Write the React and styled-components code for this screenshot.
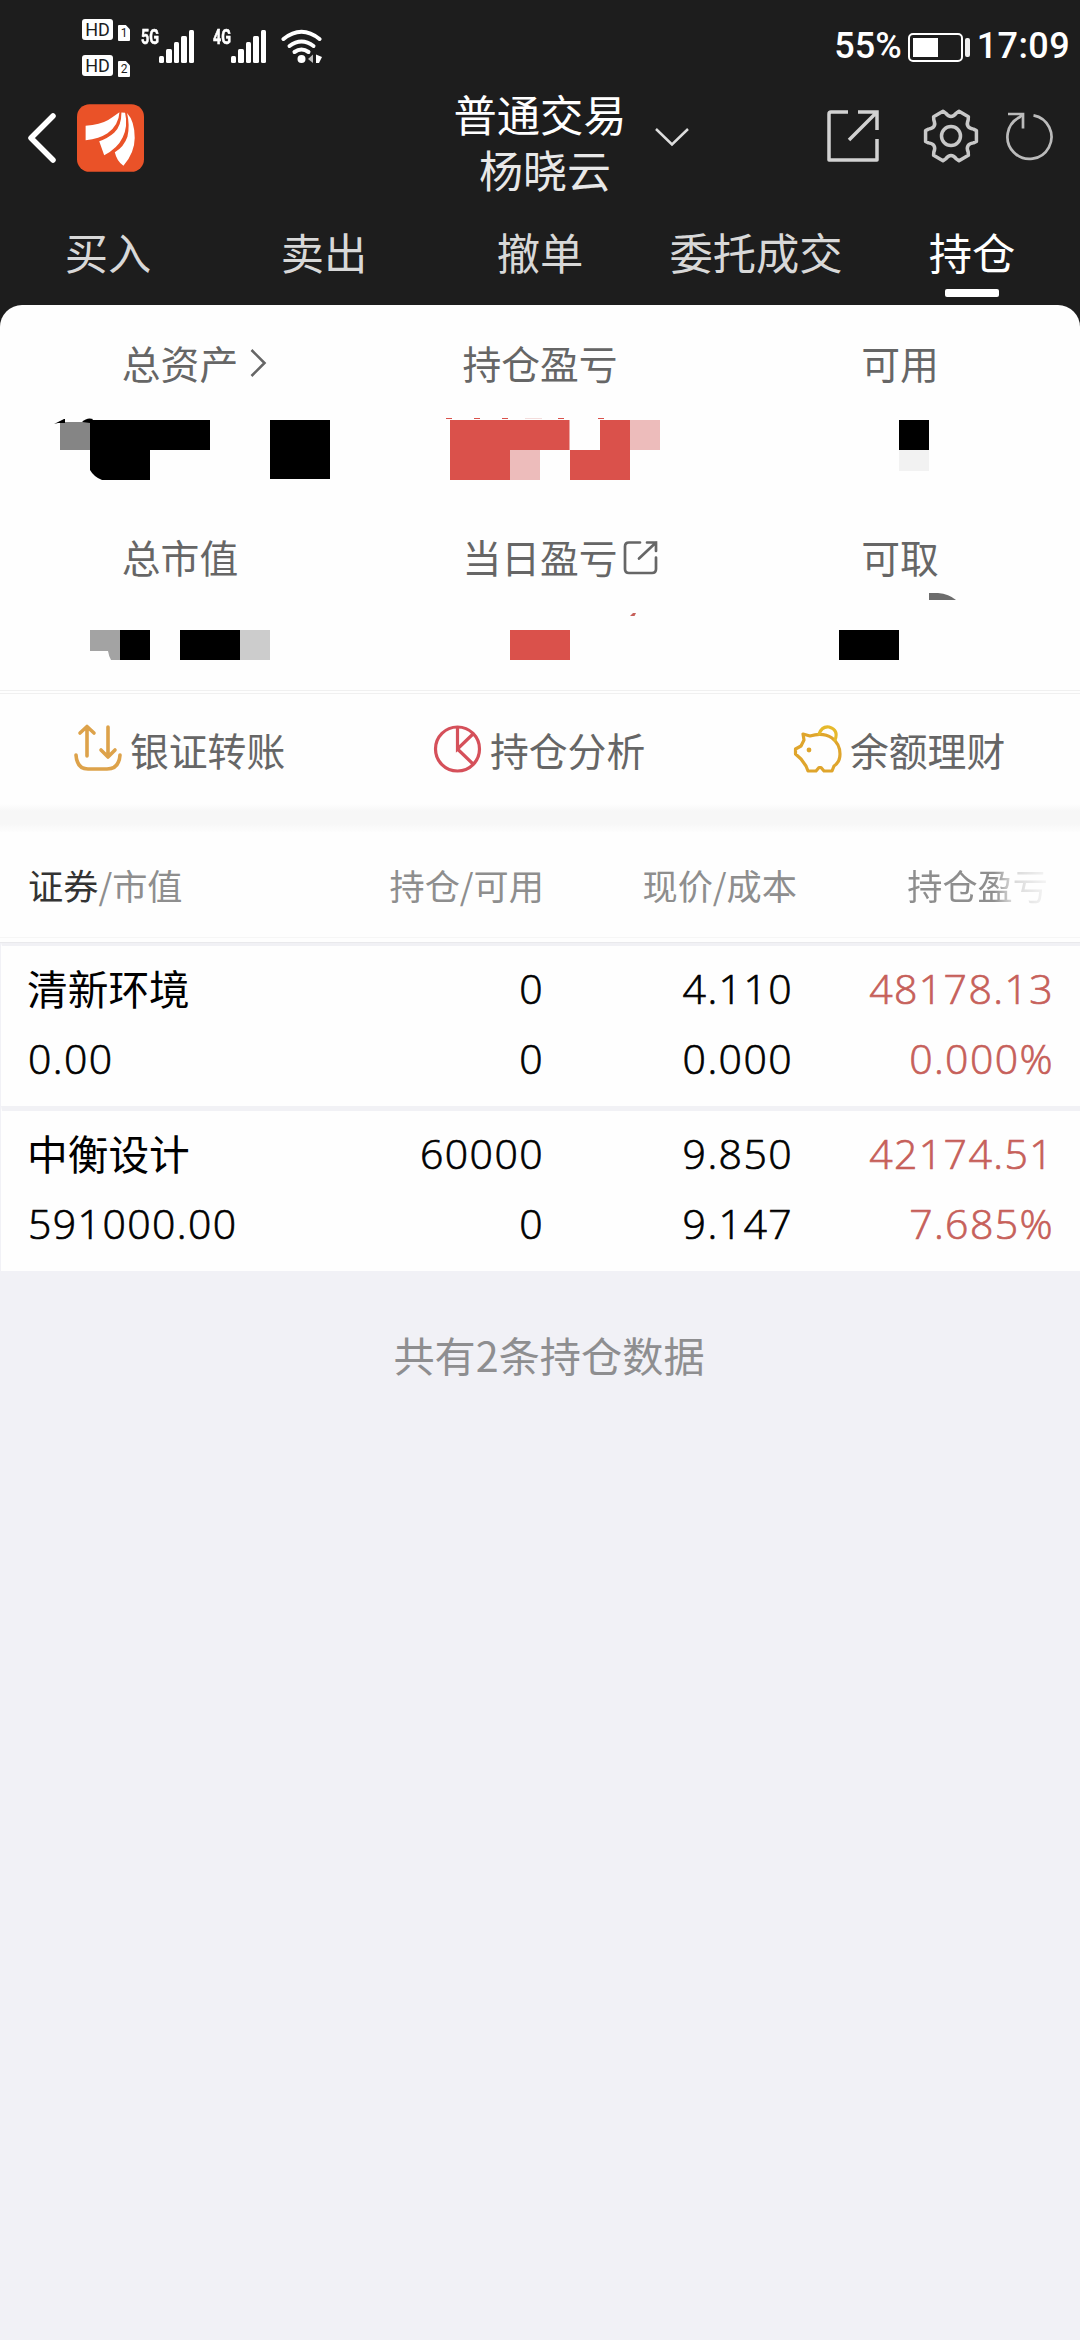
import React from "react";
import styled, { createGlobalStyle } from "styled-components";

const GlobalStyle = createGlobalStyle`
  body {
    margin: 0;
    background: #f1f1f6;
    font-family: "Noto Sans CJK SC", sans-serif;
  }
`;

const Page = styled.div`
  display: flex;
  flex-direction: column;
  width: 1080px;
  min-height: 2340px;
  background: #f1f1f6;
`;

const Dark = styled.div`
  height: 330px;
  margin-bottom: -25px;
  background: #1d1d1d;
`;

const StatusBar = styled.div`
  display: flex;
  align-items: flex-start;
  height: 65px;
  padding: 19px 10px 0 82px;
  color: #fff;
  font-family: Roboto, sans-serif;
`;

const SimList = styled.div`
  display: grid;
  row-gap: 15px;
  margin-right: 11px;
`;

const Sim = styled.div`
  display: flex;
  height: 21px;
  color: #1d1d1d;
`;

const HdBadge = styled.span`
  width: 31px;
  height: 21px;
  margin-right: 5px;
  border-radius: 3px;
  background: #fff;
  font-size: 18px;
  line-height: 22px;
  text-align: center;
`;

const SimNumber = styled.span`
  width: 12px;
  height: 16px;
  margin-top: 6px;
  border-radius: 1px;
  background: #fff;
  clip-path: polygon(0 0, 65% 0, 100% 28%, 100% 100%, 0 100%);
  font-size: 12px;
  line-height: 17px;
  text-align: center;
`;

const Network = styled.span`
  width: 18px;
  margin-top: 11px;
  font-size: 21px;
  font-weight: 700;
  line-height: 15px;
  transform: scaleX(0.68);
  transform-origin: left;
  -webkit-text-stroke: 0.6px #fff;
`;

const SignalIcon = styled.svg`
  width: 35px;
  height: 34px;
  margin: 11px 19px 0 0;
`;

const WifiIcon = styled.svg`
  width: 42px;
  height: 36px;
  margin: 10px auto 0 -4px;
`;

const StatusText = styled.span`
  margin-top: 6px;
  font-size: 36px;
  font-weight: 500;
  line-height: 42px;
  letter-spacing: ${(props) => props.$spacing || 0}px;
`;

const BatteryIcon = styled.svg`
  width: 62px;
  height: 29px;
  margin: 14px 7px 0 6px;
`;

const Header = styled.div`
  display: flex;
  align-items: center;
  height: 116px;
  color: #fff;

  > svg {
    flex: none;
    margin-bottom: 8px;
  }
`;

const BackIcon = styled.svg`
  width: 30px;
  height: 52px;
  margin-left: 27px;
`;

const Logo = styled.svg`
  width: 67px;
  height: 68px;
  margin-left: 20px;
`;

const Title = styled.div`
  width: 176px;
  margin: 0 0 2px 308px;
  font-size: 43.3px;
  line-height: 56px;
  text-align: center;
  white-space: nowrap;
`;

const Account = styled.div`
  padding-left: 10px;
  color: #e8e8e8;
  font-size: 44px;
`;

const DownIcon = styled.svg`
  width: 36px;
  height: 20px;
  margin-left: 26px;
`;

const Tools = styled.div`
  display: flex;
  align-items: center;
  margin: 0 0 13px 137px;
`;

const OpenIcon = styled.svg`
  width: 52px;
  height: 52px;
`;

const GearIcon = styled.svg`
  width: 56px;
  height: 56px;
  margin-left: 44px;
`;

const RefreshIcon = styled.svg`
  width: 50px;
  height: 50px;
  margin-left: 25px;
`;

const Tabs = styled.div`
  display: grid;
  grid-template-columns: repeat(5, 1fr);
  height: 105px;
`;

const Tab = styled.div`
  display: flex;
  flex-direction: column;
  align-items: center;
  padding-top: 21px;
  color: ${(props) => (props.$active ? "#fff" : "#d8d8d8")};
  font-size: 43.3px;
  line-height: 60px;

  &::after {
    content: "";
    width: 54px;
    height: 8px;
    margin-top: 8px;
    border-radius: 2px;
    background: ${(props) => (props.$active ? "#fff" : "transparent")};
  }
`;

const Summary = styled.div`
  display: grid;
  grid-template-columns: repeat(3, 360px);
  grid-template-rows: 150px 150px;
  row-gap: 44px;
  padding: 32px 0 9px;
  border-radius: 22px 22px 0 0;
  background: #fefefe;
`;

const StatBox = styled.div`
  display: flex;
  flex-direction: column;
`;

const StatLabel = styled.div`
  display: flex;
  align-items: center;
  justify-content: center;
  height: 50px;
  color: #666;
  font-size: 38.8px;
  line-height: 50px;

  > svg {
    flex: none;
    width: 36px;
    height: 36px;
    margin: 4px -40px 0 4px;
  }
`;

const Mosaic = styled.svg`
  width: 360px;
  height: 100px;
`;

const Rule = styled.div`
  height: 2px;
  border: solid #f0f0f0;
  border-width: 1px 0;
  background: #fefefe;
`;

const Actions = styled.div`
  display: grid;
  grid-template-columns: repeat(3, 360px);
  height: 110px;
  background: #fefefe;
`;

const Action = styled.div`
  display: flex;
  align-items: center;
  padding-left: 73px;
  color: #666;
  font-size: 38.8px;
  line-height: 54px;

  > svg {
    width: 50px;
    height: 50px;
    margin-right: 7px;
  }
`;

const Band = styled.div`
  height: 28px;
  background: linear-gradient(#fefefe, #f7f7f7 25%, #f7f7f7 70%, #fdfdfd);
`;

const TableHead = styled.div`
  display: grid;
  grid-template-columns: 272px 244px 253px 257px;
  align-items: center;
  height: 105px;
  padding-left: 28px;
  border-bottom: 1px solid #f6f6f6;
  background: #fefefe;
  color: #8e8e8e;
  font-size: 35.2px;
  line-height: 50px;

  > :not(:first-child) {
    text-align: right;
  }

  b {
    color: #333;
    font-weight: 400;
  }
`;

const FadedHead = styled.div`
  padding-right: 6px;
  mask-image: linear-gradient(to right, #000 197px, rgba(0, 0, 0, 0.35) 214px, rgba(0, 0, 0, 0.08) 251px);
`;

const HeadRule = styled.div`
  height: 4px;
  border-bottom: 1px solid #e9e9ec;
  background: #fefefe;
`;

const Position = styled.div`
  display: grid;
  grid-template-columns: 272px 244px 249px 261px;
  margin-left: 1px;
  padding: 7px 0 13px 26px;
  border-left: 1px solid #fefefe;
  border-top: ${(props) => props.$gap}px solid #f1f1f5;
  background: #fefefe;

  > :not(:first-child) {
    text-align: right;
  }
`;

const Value = styled.div`
  color: ${(props) => (props.$gain ? "#c6605a" : "#000")};
  font-family: "Open Sans", "Noto Sans CJK SC", sans-serif;
  font-size: 41px;
  font-weight: 300;
  line-height: 70px;
  letter-spacing: 1.4px;
  white-space: nowrap;
  -webkit-text-stroke: 0.7px currentColor;
`;

const Name = styled.div`
  color: #000;
  font-size: 40.7px;
  line-height: 70px;
  text-indent: -1px;
`;

const Footer = styled.div`
  flex: 1;
  margin-left: 2px;
  padding: 48px 0 0 16px;
  color: #8e8e90;
  font-size: 41.2px;
  line-height: 70px;
  text-align: center;
`;

const BLACK = "#000";
const RED = "#da514b";
const PINK = "#edbcbb";

// blocks are [x, y, width, height, fill] inside the cell
const stats = [
  {
    label: "总资产",
    icon: "arrow",
    blocks: [
      [60, 35, 30, 28, "#858585"],
      [90, 33, 120, 30, BLACK],
      [270, 33, 60, 59, BLACK],
    ],
    paths: [
      ["M90 63H150V93H102Q94 90 90 83Z", BLACK],
      ["M54 37L64 32H65V36H58Z", BLACK],
      ["M82 35Q87 30 93 32L90 36Z", BLACK],
    ],
  },
  {
    label: "持仓盈亏",
    blocks: [
      [90, 33, 119.5, 30, RED],
      [90, 63, 60, 30, RED],
      [150, 63, 30, 30, PINK],
      [210, 63, 60, 30, RED],
      [240, 33, 30, 30, RED],
      [270, 33, 30, 30, PINK],
      [86, 31, 6, 1, RED],
      [114, 31, 6, 1, RED],
      [142, 31, 6, 1, RED],
      [165, 31, 17, 1, "#f3dcdb"],
      [198, 31, 6, 1, RED],
      [238, 31, 6, 1, RED],
    ],
  },
  {
    label: "可用",
    blocks: [
      [179, 33, 30, 30, BLACK],
      [179, 63, 30, 21, "#f2f2f2"],
    ],
  },
  {
    label: "总市值",
    blocks: [
      [120, 49, 30, 30, BLACK],
      [180, 49, 60, 30, BLACK],
      [240, 49, 30, 30, "#ccc"],
    ],
    paths: [["M90 49H120V79H111Q109 76 108 70H90Z", "#a3a3a3"]],
  },
  {
    label: "当日盈亏",
    icon: "open",
    blocks: [[150, 49, 60, 30, RED]],
    paths: [["M270 35L273 32H276L274.5 35Z", "#c6605a"]],
  },
  {
    label: "可取",
    blocks: [[119, 49, 60, 30, BLACK]],
    paths: [["M209 12H218Q229 13 236 19H209Z", "#6c6c6c"]],
  },
];

const positions = [
  {
    name: "清新环境",
    amount: "0.00",
    held: ["0", "0"],
    price: ["4.110", "0.000"],
    profit: ["48178.13", "0.000%"],
  },
  {
    name: "中衡设计",
    amount: "591000.00",
    held: ["60000", "0"],
    price: ["9.850", "9.147"],
    profit: ["42174.51", "7.685%"],
  },
];

function gearPath() {
  const at = (deg, r) => {
    const a = (deg * Math.PI) / 180;
    return `${(28 + r * Math.cos(a)).toFixed(2)} ${(28 + r * Math.sin(a)).toFixed(2)}`;
  };
  let d = `M${at(-12, 26)}`;
  for (let i = 0; i < 6; i++) {
    const a = i * 60;
    d += `L${at(a + 12, 26)}L${at(a + 17, 23.5)}C${at(a + 24, 18.5)} ${at(a + 36, 18.5)} ${at(a + 43, 23.5)}L${at(a + 48, 26)}`;
  }
  return d + "Z";
}

function Signal() {
  return (
    <SignalIcon viewBox="0 0 35 34" fill="#fff">
      <rect x="0" y="26" width="5" height="7" rx="1.5" />
      <rect x="7" y="19" width="6" height="14" rx="1.5" />
      <rect x="15" y="12" width="5" height="21" rx="1.5" />
      <rect x="22" y="6" width="6" height="27" rx="1.5" />
      <rect x="30" y="0" width="5" height="33" rx="1.5" />
    </SignalIcon>
  );
}

function LabelIcon({ type }) {
  if (type === "arrow") {
    return (
      <svg viewBox="0 0 36 36" fill="none" stroke="#666" strokeWidth="2.6">
        <path d="M9.5 4L22.5 17L9.5 30" />
      </svg>
    );
  }
  return (
    <svg viewBox="0 0 36 36" fill="none" stroke="#666" strokeWidth="2.7" strokeLinecap="round">
      <path d="M18 2.5H7Q3 2.5 3 6.5V29Q3 33 7 33H30Q34 33 34 29V17.5" />
      <path d="M25 2.5H34V11M34 2.5L17 18.5" />
    </svg>
  );
}

function Stat({ label, icon, blocks, paths = [] }) {
  return (
    <StatBox>
      <StatLabel>
        {label}
        {icon && <LabelIcon type={icon} />}
      </StatLabel>
      <Mosaic viewBox="0 0 360 100">
        {blocks.map(([x, y, width, height, fill]) => (
          <rect key={`${x}-${y}`} x={x} y={y} width={width} height={height} fill={fill} />
        ))}
        {paths.map(([d, fill]) => (
          <path key={d} d={d} fill={fill} />
        ))}
      </Mosaic>
    </StatBox>
  );
}

export default function App() {
  return (
    <Page>
      <GlobalStyle />
      <Dark>
        <StatusBar>
          <SimList>
            {[1, 2].map((n) => (
              <Sim key={n}>
                <HdBadge>HD</HdBadge>
                <SimNumber>{n}</SimNumber>
              </Sim>
            ))}
          </SimList>
          <Network>5G</Network>
          <Signal />
          <Network>4G</Network>
          <Signal />
          <WifiIcon viewBox="0 0 42 36" fill="none" stroke="#fff" strokeWidth="4" strokeLinecap="round">
            <path d="M2.5 10Q20.5 -4.5 38.5 10" />
            <path d="M8.5 17Q20.5 8 32.5 17" />
            <path d="M13.5 23Q20.5 18 27.5 23" />
            <circle cx="20.5" cy="30" r="4" fill="#fff" stroke="none" />
            <path d="M32 25.5V34L27 30Z" fill="#bbb" stroke="none" />
            <path d="M35 25.5V34H38L41 28Z" fill="#fff" stroke="none" />
          </WifiIcon>
          <StatusText>55%</StatusText>
          <BatteryIcon viewBox="0 0 62 29">
            <rect x="1" y="1" width="53" height="27" rx="4" fill="none" stroke="#fff" strokeWidth="2" />
            <rect x="5" y="5" width="25" height="19" fill="#fff" />
            <rect x="57" y="5" width="5" height="19" rx="2" fill="#eee" />
          </BatteryIcon>
          <StatusText $spacing={0.4}>17:09</StatusText>
        </StatusBar>

        <Header>
          <BackIcon viewBox="0 0 30 52" fill="none" stroke="#fff" strokeWidth="5.5" strokeLinecap="round" strokeLinejoin="round">
            <path d="M26 4L4 26L26 48" />
          </BackIcon>
          <Logo viewBox="0 0 202 204">
            <rect width="202" height="204" rx="38" fill="#ea5228" />
            <g fill="#fff">
              <path d="M26 65V109Q68 104 92 88Q126 62 128 24Q108 38 94 48Q70 62 26 65Z" />
              <path d="M134 25Q134 66 112 86Q94 102 67 112L82 154Q122 134 138 100Q154 66 145 26Z" />
              <path d="M151 27Q160 66 152 98Q142 128 114 145Q120 172 140 186Q174 146 174 102Q174 52 151 27Z" />
            </g>
          </Logo>
          <Title>
            普通交易
            <Account>杨晓云</Account>
          </Title>
          <DownIcon viewBox="0 0 36 20" fill="none" stroke="#ddd" strokeWidth="2.5">
            <path d="M2 1L18 16.5L34 1" />
          </DownIcon>
          <Tools>
            <OpenIcon viewBox="0 0 52 52" fill="none" stroke="#d2d2d2" strokeWidth="3.5">
              <path d="M21 2H4Q2 2 2 4V50H50V29" strokeLinejoin="round" />
              <path d="M31 2H50V20M50 2L22 30" />
            </OpenIcon>
            <GearIcon viewBox="0 0 56 56" fill="none" stroke="#c8c8c8" strokeWidth="3.5" strokeLinejoin="round">
              <path d={gearPath()} />
              <circle cx="28" cy="28" r="9.5" />
            </GearIcon>
            <RefreshIcon viewBox="0 0 50 50" fill="none" stroke="#bbb" strokeWidth="2.7">
              <path d="M29.5 4.3A22 22 0 1 1 15.500 6.3L19 3" />
              <path d="M4 3H19V17.5" />
            </RefreshIcon>
          </Tools>
        </Header>

        <Tabs>
          <Tab>买入</Tab>
          <Tab>卖出</Tab>
          <Tab>撤单</Tab>
          <Tab>委托成交</Tab>
          <Tab $active>持仓</Tab>
        </Tabs>
      </Dark>

      <Summary>
        {stats.map((stat) => (
          <Stat key={stat.label} {...stat} />
        ))}
      </Summary>
      <Rule />

      <Actions>
        <Action>
          <svg viewBox="0 0 50 50" fill="none" stroke="#dda24a" strokeWidth="3.6" strokeLinecap="round" strokeLinejoin="round">
            <path d="M3 31Q4 45 15 45H34Q46 45 47 31" />
            <path d="M14 32V3M7 9L14 2.5L21 9M35 3V32M28 26L35 33L42 26" />
          </svg>
          银证转账
        </Action>
        <Action>
          <svg viewBox="0 0 50 50" fill="none" stroke="#d5505a" strokeWidth="3.2">
            <circle cx="24.5" cy="25" r="22" />
            <path d="M24.5 3V25L40 10M24.5 25L40 40" />
          </svg>
          持仓分析
        </Action>
        <Action>
          <svg viewBox="0 0 50 50" fill="none" stroke="#dfa52c" strokeWidth="3.2" strokeLinecap="round" strokeLinejoin="round">
            <path d="M10 10L17 12Q30 8 39 14Q47 20 47 30Q47 38 41 42L39 47H31L28 43.5H26L23 47H15L13 42L8 35L2.5 30V25L8 22L11 16Z" />
            <path d="M26 10Q29 2 36 3Q46 6 42 16" stroke="#e6b92c" />
            <circle cx="16" cy="26" r="2.4" fill="#dfa52c" stroke="none" />
          </svg>
          余额理财
        </Action>
      </Actions>
      <Band />

      <TableHead>
        <div>
          <b>证券</b>/市值
        </div>
        <div>持仓/可用</div>
        <div>现价/成本</div>
        <FadedHead>持仓盈亏</FadedHead>
      </TableHead>
      <HeadRule />

      {positions.map((item, i) => (
        <Position key={item.name} $gap={i === 0 ? 3 : 5}>
          <div>
            <Name>{item.name}</Name>
            <Value>{item.amount}</Value>
          </div>
          <div>
            {item.held.map((value, n) => (
              <Value key={n}>{value}</Value>
            ))}
          </div>
          <div>
            {item.price.map((value, n) => (
              <Value key={n}>{value}</Value>
            ))}
          </div>
          <div>
            {item.profit.map((value) => (
              <Value key={value} $gain>
                {value}
              </Value>
            ))}
          </div>
        </Position>
      ))}

      <Footer>共有2条持仓数据</Footer>
    </Page>
  );
}
